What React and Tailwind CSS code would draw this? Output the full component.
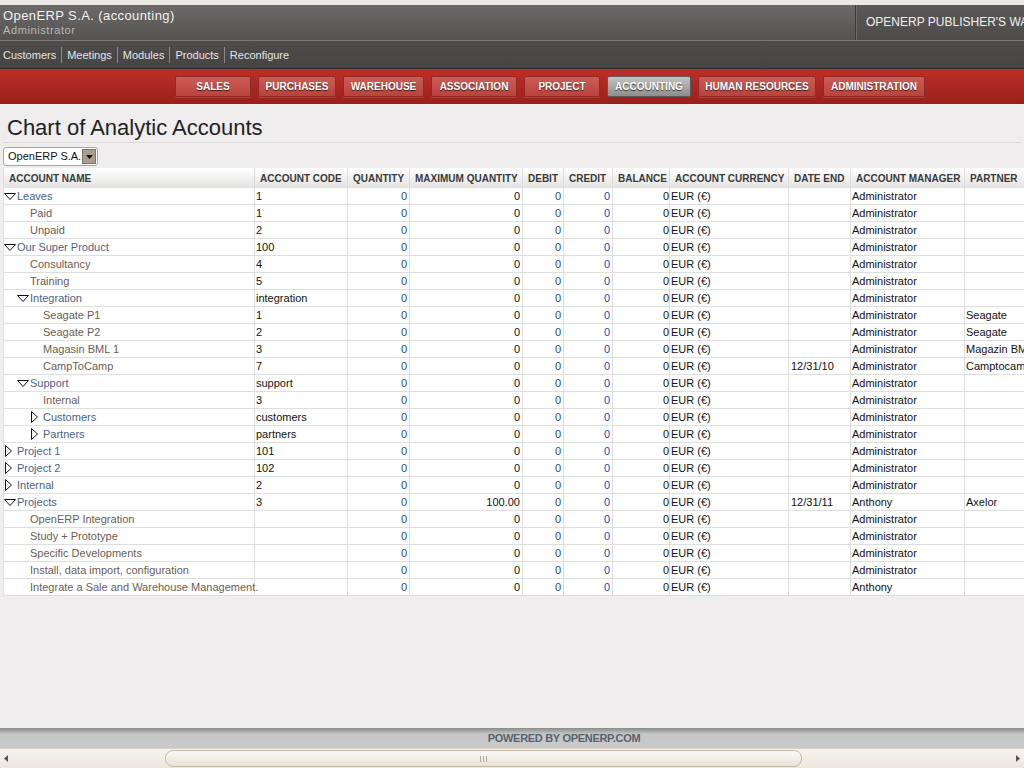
import React from 'react';

const MENU = [
  { label: 'SALES', w: 'w-[76px]' },
  { label: 'PURCHASES', w: 'w-[78px]' },
  { label: 'WAREHOUSE', w: 'w-[81px]' },
  { label: 'ASSOCIATION', w: 'w-[86px]' },
  { label: 'PROJECT', w: 'w-[76px]' },
  { label: 'ACCOUNTING', w: 'w-[84px]' },
  { label: 'HUMAN RESOURCES', w: 'w-[118px]' },
  { label: 'ADMINISTRATION', w: 'w-[102px]' },
];

const SHORTCUTS = ['Customers', 'Meetings', 'Modules', 'Products', 'Reconfigure'];

const COLUMNS = [
  { label: 'ACCOUNT NAME', w: 252 },
  { label: 'ACCOUNT CODE', w: 93 },
  { label: 'QUANTITY', w: 62 },
  { label: 'MAXIMUM QUANTITY', w: 113 },
  { label: 'DEBIT', w: 41 },
  { label: 'CREDIT', w: 49 },
  { label: 'BALANCE', w: 57 },
  { label: 'ACCOUNT CURRENCY', w: 119 },
  { label: 'DATE END', w: 62 },
  { label: 'ACCOUNT MANAGER', w: 114 },
  { label: 'PARTNER', w: 100 },
];

// level, state: open | closed | leaf
const ROWS = [
  { name: 'Leaves', level: 0, state: 'open', code: '1' },
  { name: 'Paid', level: 1, state: 'leaf', code: '1' },
  { name: 'Unpaid', level: 1, state: 'leaf', code: '2' },
  { name: 'Our Super Product', level: 0, state: 'open', code: '100' },
  { name: 'Consultancy', level: 1, state: 'leaf', code: '4' },
  { name: 'Training', level: 1, state: 'leaf', code: '5' },
  { name: 'Integration', level: 1, state: 'open', code: 'integration' },
  { name: 'Seagate P1', level: 2, state: 'leaf', code: '1', partner: 'Seagate' },
  { name: 'Seagate P2', level: 2, state: 'leaf', code: '2', partner: 'Seagate' },
  { name: 'Magasin BML 1', level: 2, state: 'leaf', code: '3', partner: 'Magazin BML' },
  { name: 'CampToCamp', level: 2, state: 'leaf', code: '7', date: '12/31/10', partner: 'Camptocamp' },
  { name: 'Support', level: 1, state: 'open', code: 'support' },
  { name: 'Internal', level: 2, state: 'leaf', code: '3' },
  { name: 'Customers', level: 2, state: 'closed', code: 'customers' },
  { name: 'Partners', level: 2, state: 'closed', code: 'partners' },
  { name: 'Project 1', level: 0, state: 'closed', code: '101' },
  { name: 'Project 2', level: 0, state: 'closed', code: '102' },
  { name: 'Internal', level: 0, state: 'closed', code: '2' },
  { name: 'Projects', level: 0, state: 'open', code: '3', max: '100.00', date: '12/31/11', manager: 'Anthony', partner: 'Axelor' },
  { name: 'OpenERP Integration', level: 1, state: 'leaf', code: '' },
  { name: 'Study + Prototype', level: 1, state: 'leaf', code: '' },
  { name: 'Specific Developments', level: 1, state: 'leaf', code: '' },
  { name: 'Install, data import, configuration', level: 1, state: 'leaf', code: '' },
  { name: 'Integrate a Sale and Warehouse Management.', level: 1, state: 'leaf', code: '', manager: 'Anthony' },
];

function Expander({ state }) {
  if (state === 'leaf') return <span className="inline-block w-[13px] shrink-0" />;
  if (state === 'open') {
    return (
      <span className="inline-flex w-[13px] shrink-0 items-center">
        <svg width="12" height="7" viewBox="0 0 12 7">
          <path d="M0.5 0.5 H11.5 L6 6.5 Z" fill="#fff" stroke="#111" strokeWidth="1" />
        </svg>
      </span>
    );
  }
  return (
    <span className="inline-flex w-[13px] shrink-0 items-center pl-[1px]">
      <svg width="7" height="12" viewBox="0 0 7 12">
        <path d="M0.5 0.5 V11.5 L6.5 6 Z" fill="#fff" stroke="#111" strokeWidth="1" />
      </svg>
    </span>
  );
}

function NameCell({ row }) {
  const color = row.state === 'leaf' ? 'text-[#6b5d52]' : 'text-[#4d5f82]';
  const pad = ['pl-0', 'pl-[13px]', 'pl-[26px]'][row.level];
  return (
    <div className={`flex h-[16px] items-center ${pad} ${color} whitespace-nowrap`}>
      <Expander state={row.state} />
      <span>{row.name}</span>
    </div>
  );
}

function MenuButton({ label, w }) {
  const active = label === 'ACCOUNTING';
  return (
    <div
      className={`${w} h-[21px] flex items-center justify-center rounded-[2px] border text-[10px] font-bold text-white [text-shadow:0_1px_1px_rgba(0,0,0,0.7)] ${
        active
          ? 'border-[#5a5a5a] bg-gradient-to-b from-[#c4c4c4] to-[#8d8d8d]'
          : 'border-[#8f2a24] bg-gradient-to-b from-[#cc5c56] to-[#b8433d] shadow-[0_1px_0_rgba(255,255,255,0.15)]'
      }`}
    >
      {label}
    </div>
  );
}

const cell = 'p-0 h-[17px] leading-[16px] border-b border-r border-[#dedede]';

export default function App() {
  return (
    <div className="w-[1024px] h-[768px] overflow-hidden flex flex-col bg-[#efeded] font-['Liberation_Sans',Arial,sans-serif]">
      {/* top header */}
      <div className="h-[5px] bg-[#ece8e3] shrink-0" />
      <div className="h-[35px] shrink-0 flex bg-gradient-to-b from-[#6c6a68] to-[#555352]">
        <div className="flex-1 pl-[3px] pt-[4px] leading-none">
          <div className="text-[13px] tracking-[0.4px] text-[#f2f2f2]">OpenERP S.A. (accounting)</div>
          <div className="mt-[3px] text-[11px] tracking-[0.6px] text-[#b9b7b4]">Administrator</div>
        </div>
        <div className="w-[169px] border-l border-l-[#3c3b3a] shadow-[inset_1px_0_0_#6e6c6a] bg-gradient-to-b from-[#5b5957] to-[#4d4c4a] pl-[10px] pt-[11px] overflow-hidden whitespace-nowrap text-[12px] leading-none">
          <span className="tracking-[0px] text-[#f0f0f0]">OPENERP PUBLISHER&apos;S WARRANTY</span>
        </div>
      </div>
      <div className="h-px bg-[#7b7977] shrink-0" />
      {/* shortcuts */}
      <div className="h-[27px] shrink-0 flex items-center pl-[3px] pt-[1px] bg-gradient-to-b from-[#4e4c4b] to-[#464544] text-[11px] text-[#e4e4e4]">
        {SHORTCUTS.map((s, i) => (
          <React.Fragment key={s}>
            {i > 0 && <span className="mx-[5px] h-[16px] w-px bg-[#8c8a88]" />}
            <span>{s}</span>
          </React.Fragment>
        ))}
      </div>
      {/* main menu */}
      <div className="h-px bg-[#2e2d2c] shrink-0" />
      <div className="h-[35px] shrink-0 flex items-center justify-center gap-[7px] pl-[76px] bg-gradient-to-b from-[#bd2f28] to-[#992019]">
        {MENU.map((m) => (
          <MenuButton key={m.label} label={m.label} w={m.w} />
        ))}
      </div>

      {/* body */}
      <div className="flex-1 min-h-0">
        <div className="mx-[3px] pt-[11px] pb-[1px] border-b border-b-[#dcdada]">
          <h1 className="pl-[4px] text-[22px] leading-[26px] text-[#222]">Chart of Analytic Accounts</h1>
        </div>
        <div className="mt-[4px] ml-[3px] w-[95px] h-[19px] flex items-center justify-between rounded-[3px] border border-[#a9a6a2] bg-white pl-[4px] pr-[1px]">
          <span className="text-[11px] text-[#111]">OpenERP S.A.</span>
          <span className="w-[14px] h-[15px] flex items-center justify-center bg-[#a99d8d] border border-[#7d7468]">
            <svg width="7" height="4" viewBox="0 0 7 4">
              <path d="M0 0 H7 L3.5 4 Z" fill="#111" />
            </svg>
          </span>
        </div>
        <table className="mt-[2px] ml-[3px] table-fixed border-separate border-spacing-0 text-[11px] w-[1062px]">
          <colgroup>
            {COLUMNS.map((c) => (
              <col key={c.label} style={{ width: c.w }} />
            ))}
          </colgroup>
          <thead>
            <tr className="bg-gradient-to-b from-[#ffffff] to-[#e4e3e2]">
              {COLUMNS.map((c, i) => (
                <th
                  key={c.label}
                  className={`h-[20px] p-0 px-[5px] text-left font-bold text-[10px] text-[#3a3a3a] whitespace-nowrap border-r border-r-[#dcdcdc] ${
                    i === 0 ? 'border-l border-l-[#dcdcdc]' : ''
                  }`}
                >
                  {c.label}
                </th>
              ))}
            </tr>
          </thead>
          <tbody className="bg-white">
            {ROWS.map((r, i) => (
              <tr key={i}>
                <td className={`${cell} border-l`}>
                  <NameCell row={r} />
                </td>
                <td className={`${cell} pl-[1px] text-[#111]`}>{r.code}</td>
                <td className={`${cell} pr-[2px] text-right text-[#2348a8]`}>0</td>
                <td className={`${cell} pr-[2px] text-right text-[#111]`}>{r.max || '0'}</td>
                <td className={`${cell} pr-[2px] text-right text-[#2348a8]`}>0</td>
                <td className={`${cell} pr-[2px] text-right text-[#2348a8]`}>0</td>
                <td className={`${cell} text-right text-[#111]`}>0</td>
                <td className={`${cell} pl-[1px] text-[#111]`}>EUR (€)</td>
                <td className={`${cell} pl-[2px] text-[#111]`}>{r.date || ''}</td>
                <td className={`${cell} pl-[1px] text-[#111]`}>{r.manager || 'Administrator'}</td>
                <td className={`${cell} pl-[1px] text-[#111] whitespace-nowrap overflow-hidden`}>{r.partner || ''}</td>
              </tr>
            ))}
          </tbody>
        </table>
      </div>

      {/* footer */}
      <div className="h-[20px] shrink-0 flex items-center justify-center pl-[104px] bg-gradient-to-b from-[#8a8a8a] via-[#c6c6c6] via-30% to-[#cacaca]">
        <span className="text-[11px] font-bold tracking-[-0.3px] text-[#59636e]">POWERED BY OPENERP.COM</span>
      </div>
      {/* horizontal scrollbar */}
      <div className="h-[20px] shrink-0 flex items-center bg-gradient-to-b from-[#f7f4f0] to-[#ece6dd] border-t border-t-[#d8d2c8]">
        <span className="w-[12px] flex justify-center">
          <svg width="4" height="7" viewBox="0 0 4 7"><path d="M4 0 V7 L0 3.5 Z" fill="#555" /></svg>
        </span>
        <div className="ml-[153px] w-[637px] h-[17px] rounded-[8px] border border-[#c2b9a8] bg-gradient-to-b from-[#fbf9f6] to-[#e9e2d6] flex items-center justify-center">
          <span className="flex gap-[2px]">
            <span className="w-px h-[6px] bg-[#b0a898]" />
            <span className="w-px h-[6px] bg-[#b0a898]" />
            <span className="w-px h-[6px] bg-[#b0a898]" />
          </span>
        </div>
        <div className="flex-1" />
        <span className="w-[12px] flex justify-center">
          <svg width="4" height="7" viewBox="0 0 4 7"><path d="M0 0 V7 L4 3.5 Z" fill="#555" /></svg>
        </span>
      </div>
    </div>
  );
}
